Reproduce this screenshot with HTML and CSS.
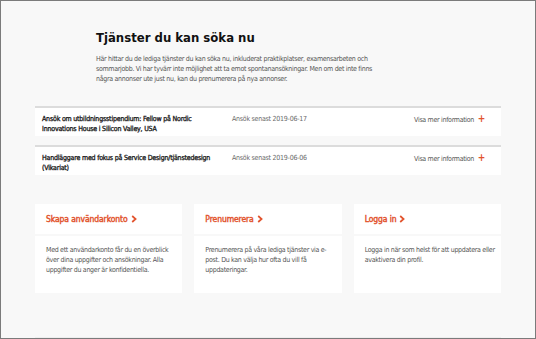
FILE: index.html
```html
<!DOCTYPE html>
<html lang="sv">
<head>
    <meta charset="UTF-8">
    <title>Tjänster du kan söka nu</title>
    <link rel="stylesheet" href="styles.css">
</head>
<body>
    <div class="frame">
        <div class="page">
            <div class="intro">
                <h1>Tjänster du kan söka nu</h1>
                <p>Här hittar du de lediga tjänster du kan söka nu, inkluderat praktikplatser, examensarbeten och sommarjobb. Vi har tyvärr inte möjlighet att ta emot spontanansökningar. Men om det inte finns några annonser ute just nu, kan du prenumerera på nya annonser.</p>
            </div>

            <div class="jobs">
                <div class="job">
                    <div class="job-title">Ansök om utbildningsstipendium: Fellow på Nordic Innovations House i Silicon Valley, USA</div>
                    <div class="job-date">Ansök senast 2019-06-17</div>
                    <div class="job-more">Visa mer information <span class="plus">+</span></div>
                </div>
                <div class="job">
                    <div class="job-title">Handläggare med fokus på Service Design/tjänstedesign (Vikariat)</div>
                    <div class="job-date">Ansök senast 2019-06-06</div>
                    <div class="job-more">Visa mer information <span class="plus">+</span></div>
                </div>
            </div>

            <div class="cards">
                <div class="card">
                    <div class="card-head">Skapa användarkonto <svg class="chev" width="6" height="8" viewBox="0 0 6 8"><polyline points="1.2,1 4.6,4 1.2,7" /></svg></div>
                    <div class="card-body">Med ett användarkonto får du en överblick över dina uppgifter och ansökningar. Alla uppgifter du anger är konfidentiella.</div>
                </div>
                <div class="card">
                    <div class="card-head">Prenumerera <svg class="chev" width="6" height="8" viewBox="0 0 6 8"><polyline points="1.2,1 4.6,4 1.2,7" /></svg></div>
                    <div class="card-body">Prenumerera på våra lediga tjänster via e-post. Du kan välja hur ofta du vill få uppdateringar.</div>
                </div>
                <div class="card">
                    <div class="card-head">Logga in <svg class="chev" width="6" height="8" viewBox="0 0 6 8"><polyline points="1.2,1 4.6,4 1.2,7" /></svg></div>
                    <div class="card-body">Logga in när som helst för att uppdatera eller avaktivera din profil.</div>
                </div>
            </div>

            <div class="next-strip"></div>
        </div>
    </div>
</body>
</html>
```

FILE: styles.css
```css
:root {
    --bg-color: #f8f8f8;
    --text-color: #222;
    --muted-color: #555;
    --accent-color: #e2532d;
    --line-color: #dcdcdc;
}

body {
    margin: 0;
    font-family: "DejaVu Sans Condensed", "DejaVu Sans", sans-serif;
    color: var(--text-color);
}

.frame {
    width: 536px;
    height: 339px;
    box-sizing: border-box;
    border: 1px solid #7b7b7b;
    background: var(--bg-color);
    overflow: hidden;
}

.page {
    width: 466px;
    margin: 0 auto;
}

/* Intro */
.intro {
    padding: 28px 0 0 61px;
}

.intro h1 {
    margin: 0 0 8px;
    font-size: 13px;
    line-height: 17px;
    font-weight: bold;
    color: #111;
}

.intro p {
    margin: 0;
    max-width: 280px;
    font-size: 7px;
    line-height: 10px;
    letter-spacing: -0.3px;
    color: var(--muted-color);
}

/* Job rows */
.jobs {
    margin-top: 22px;
}

.job {
    display: grid;
    grid-template-columns: 190px 1fr auto;
    align-items: start;
    background: #fff;
    border-top: 2px solid var(--line-color);
    padding: 6px 16px 2px 7px;
    min-height: 20px;
    margin-bottom: 9px;
    font-size: 7px;
    line-height: 10px;
}

/* regular face with a stroke: the bold face is too wide */
.job-title {
    font-size: 7px;
    padding-right: 12px;
    color: #1a1a1a;
    -webkit-text-stroke: 0.3px #1a1a1a;
    letter-spacing: -0.2px;
}

.job-date {
    color: #6a6a6a;
    letter-spacing: -0.25px;
}

.job-more {
    color: #555;
    letter-spacing: -0.3px;
}

.plus {
    color: var(--accent-color);
    font-weight: bold;
    font-size: 10px;
    margin-left: 2px;
}

/* Cards */
.cards {
    margin-top: 29px;
    display: grid;
    grid-template-columns: repeat(3, 1fr);
    gap: 12px;
}

.card-head {
    background: #fff;
    height: 30px;
    padding-left: 11px;
    display: flex;
    align-items: center;
    gap: 3px;
    font-size: 8.5px;
    letter-spacing: -0.1px;
    color: var(--accent-color);
    -webkit-text-stroke: 0.4px var(--accent-color);
}

.chev polyline {
    fill: none;
    stroke: var(--accent-color);
    stroke-width: 1.7;
}

.card-body {
    background: #fff;
    margin-top: 2px;
    height: 57px;
    box-sizing: border-box;
    padding: 9px 6px 0 11px;
    font-size: 7px;
    line-height: 10px;
    letter-spacing: -0.3px;
    color: var(--muted-color);
}

.next-strip {
    margin-top: 44px;
    height: 10px;
    background: #fff;
    border-top: 1px solid #eee;
}
```
